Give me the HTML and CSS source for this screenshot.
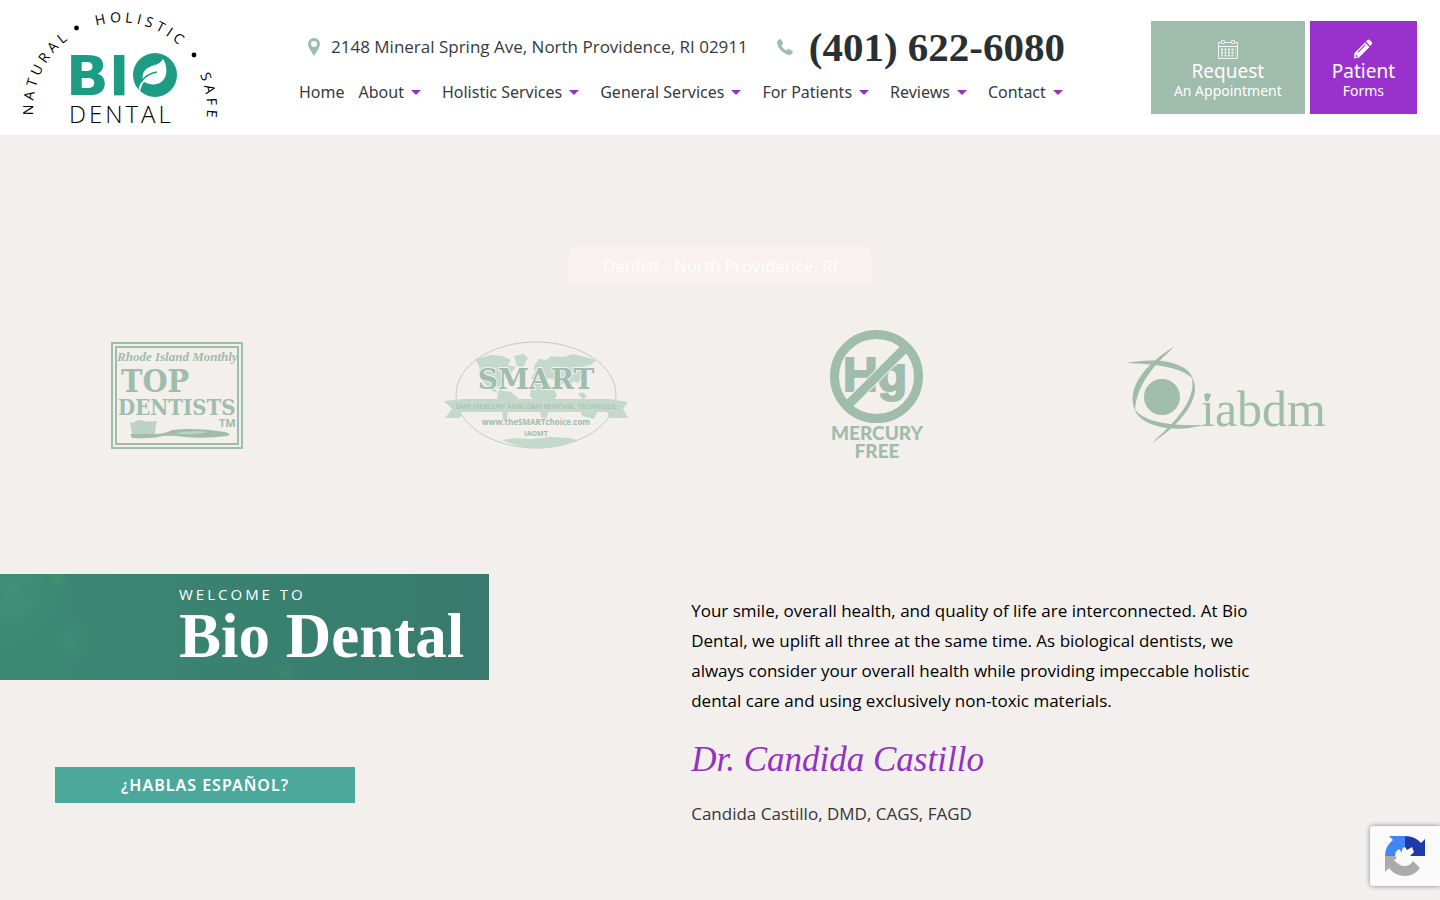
FILE: index.html
```
<!DOCTYPE html>
<html lang="en">
<head>
    <meta charset="UTF-8">
    <meta name="viewport" content="width=device-width, initial-scale=1.0">
    <title>Bio Dental</title>
    <link rel="stylesheet" href="styles.css">
</head>
<body>
    <header class="site-header">
        <a class="logo" href="#" aria-label="Bio Dental">
            <svg width="200" height="135" viewBox="20 0 200 135">
                <path id="arc" d="M33.8 121.1 A87 87 0 1 1 206.2 121.1" fill="none"/>
                <g class="logo-arc">
                    <text><textPath href="#arc" startOffset="6">NATURAL</textPath></text>
                    <text><textPath href="#arc" startOffset="124">HOLISTIC</textPath></text>
                    <text><textPath href="#arc" startOffset="249">SAFE</textPath></text>
                </g>
                <circle cx="76.5" cy="28" r="2.4"/>
                <circle cx="194" cy="55" r="2.4"/>
                <text class="logo-bio" x="66" y="95">BI</text>
                <circle cx="155" cy="75" r="22" fill="#1d9c84"/>
                <path d="M139 91 C139 86 140 83 143 81 C141 71 147 67 155 65 C159 64 161 62 163 59 C166 63 167 70 166 74 C164 84 154 87 144 82 C142 84 141 88 140 91Z" fill="#fff"/>
                <path d="M141 82 C145 76 150 73 157 72" fill="none" stroke="#1d9c84" stroke-width="1.5"/>
                <text class="logo-dental" x="69" y="123">DENTAL</text>
            </svg>
        </a>

        <div class="header-main">
            <div class="contact-row">
                <a class="address" href="#">
                    <svg width="12" height="18" viewBox="0 0 12 18"><path fill-rule="evenodd" d="M6 0a6 6 0 0 1 6 6c0 2-1 3.500-1.700 5L6 18 1.700 11C1 9.500 0 8 0 6a6 6 0 0 1 6-6zm0 3a3 3 0 1 0 0 6 3 3 0 0 0 0-6z"/></svg>
                    2148 Mineral Spring Ave, North Providence, RI 02911
                </a>
                <a class="phone" href="tel:4016226080">
                    <svg width="16" height="16" viewBox="0 0 16 16"><path d="M1 1.500C2 .5 3.500 0 4 .5L6 4c.3.800-.2 1.500-1.600 2.500.8 2 2.800 4 5 5 1-1.400 1.800-2 2.600-1.600l3.500 2c.6.500 0 2-.9 3-1 .9-2.600 1.400-4.600.6C5.500 13.700 2 10 .5 6-.2 4 .2 2.500 1 1.500z"/></svg>
                    <span>(401) 622-6080</span>
                </a>
            </div>
            <nav class="main-nav">
                <a href="#">Home</a>
                <a class="has-menu" href="#">About</a>
                <a class="has-menu" href="#">Holistic Services</a>
                <a class="has-menu" href="#">General Services</a>
                <a class="has-menu" href="#">For Patients</a>
                <a class="has-menu" href="#">Reviews</a>
                <a class="has-menu" href="#">Contact</a>
            </nav>
        </div>

        <div class="header-actions">
            <a class="action request" href="#">
                <svg width="20" height="20" viewBox="0 0 20 20" fill="none" stroke="#fff" stroke-opacity=".85">
                    <path d="M3.500 3.500h-3v16h19v-16h-3M7 3.500h6M.5 7.500h19"/>
                    <circle cx="5" cy="3" r="1.800"/><circle cx="15" cy="3" r="1.800"/>
                    <path stroke-width="2" stroke-dasharray="2 1.500" d="M3 10.500h14.500M3 13.500h14.500M3 16.500h14.500"/>
                </svg>
                <strong>Request</strong>
                <span>An Appointment</span>
            </a>
            <a class="action forms" href="#">
                <svg width="20" height="20" viewBox="0 0 20 20" fill="#fff">
                    <path d="M13 2.500l1.500-1.500q1-1 2.200 0l2 2q1 1.200 0 2.200L17.200 7z"/>
                    <path fill-rule="evenodd" d="M12 3.500L16.500 8 6 18.500 1 19.500 1.500 14zM3 15.500l-.4 2.400L5 17.500zM12 5.500l-7.500 7.500.7.700 7.500-7.500z"/>
                </svg>
                <strong>Patient</strong>
                <span>Forms</span>
            </a>
        </div>
    </header>

    <main>
        <section class="intro">
            <p class="location-tab">Dentist - North Providence, RI</p>
            <div class="awards">
                <svg width="132" height="107" viewBox="111 341 132 107" role="img" aria-label="Top Dentists">
                    <g fill="none" stroke="#9fbcad">
                        <rect x="112" y="342" width="130" height="105" stroke-width="2"/>
                        <rect x="116" y="346" width="122" height="97" stroke-width="2"/>
                    </g>
                    <text class="top-monthly" x="117" y="360">Rhode Island Monthly</text>
                    <text class="top-top" x="121" y="391">TOP</text>
                    <text class="top-dentists" x="118" y="414">DENTISTS</text>
                    <text class="top-tm" x="219" y="426">TM</text>
                    <path d="M130 421q3 2 6-1 4-2 8 0 5 1 12 0 2 1 0 3l-1 10h-23z" fill="#bdd2c6"/>
                    <path d="M131 433h24q10 0 17-4 24-3 53 2 8 2 2 4-22 3-42 1-12-2-22-1-12 3-30 2-3-1-2-4z" fill="#9fbcad"/>
                    <path d="M174 432q20-3 34-1-14 4-34 1z" fill="#bdd2c6"/>
                </svg>

                <svg width="185" height="107" viewBox="445 341 185 107" role="img" aria-label="SMART">
                    <ellipse cx="537" cy="394" rx="80" ry="53" fill="none" stroke="#c3cbc3"/>
                    <g fill="#c5d8ce">
                        <path d="M476 358l16-4 12 1 8 4-3 5 8 2-5 6-7 5-3 8-7 2 4 5-8-3-8-10-3-14z"/>
                        <path d="M515 355l10-2 4 4-5 9-6-1z"/>
                        <path d="M535 365l5-7 8 1 4-4 12 1 10-3 16 4 7 2-5 5-6 1-1 8-6 9-5-2-3 9-7-7-4 6-6-10-8-1-8 4-6-4 4-6z"/>
                        <path d="M532 383l11-3 10 5 5 9-7 12-4 12-5-2-2-13-9-8z"/>
                        <path d="M500 389l12 2 7 6-4 9-6 5-2 10-3-3-1-13-5-8z"/>
                        <path d="M579 393l5-2 4 5-4 2zM581 408l12-6 6 8-4 8-12-3z"/>
                        <path d="M503 439l14-2 16 1 18-2 20 1 7 2q-38 17-75 0z"/>
                        <path d="M445 400l20-2h145l19 3-5 7 5 9h-18l-3-6H463l-2 6h-15l7-9z"/>
                    </g>
                    <text class="smart-title" x="537" y="388">SMART</text>
                    <text class="smart-ribbon" x="537" y="408">SAFE MERCURY AMALGAM REMOVAL TECHNIQUE</text>
                    <text class="smart-url" x="537" y="424">www.theSMARTchoice.com</text>
                    <text class="smart-org" x="537" y="435">IAOMT</text>
                </svg>

                <svg width="94" height="130" viewBox="831 330 94 130" role="img" aria-label="Mercury free">
                    <text class="hg" x="844" y="391">Hg</text>
                    <g fill="none">
                        <path d="M850 404L906 348" stroke="#f3efec" stroke-width="11"/>
                        <path d="M850 404L906 348" stroke="#9fbcad" stroke-width="9"/>
                        <circle cx="877.500" cy="376.500" r="42" stroke="#9fbcad" stroke-width="9"/>
                    </g>
                    <text class="mercury" x="878" y="440">MERCURY</text>
                    <text class="mercury" x="878" y="458">FREE</text>
                </svg>

                <svg width="205" height="100" viewBox="1125 345 205 100" role="img" aria-label="iabdm">
                    <g fill="#9fbcad">
                        <circle cx="1162" cy="397" r="18"/>
                        <path d="M1126 363C1155 357 1188 361 1193 379C1182 367 1155 364 1126 363z"/>
                        <path d="M1175 346C1154 365 1137 384 1135 410C1126 390 1143 365 1175 346z"/>
                        <path d="M1192 377C1204 397 1179 426 1152 443C1178 419 1196 400 1192 377z"/>
                        <path d="M1134 408C1142 422 1170 426 1203 425C1178 433 1140 428 1134 408z"/>
                        <path d="M1204 394h7l-2 6q-2 3-4 0z"/>
                    </g>
                    <text class="iabdm" x="1201" y="426">iabdm</text>
                </svg>
            </div>
        </section>

        <section class="welcome">
            <div class="welcome-side">
                <h1 class="welcome-banner">
                    <small>Welcome to</small>
                    <span>Bio Dental</span>
                </h1>
                <a class="espanol" href="#">¿Hablas Español?</a>
            </div>
            <div class="welcome-text">
                <p>Your smile, overall health, and quality of life are interconnected. At Bio Dental, we uplift all three at the same time. As biological dentists, we always consider your overall health while providing impeccable holistic dental care and using exclusively non-toxic materials.</p>
                <p class="signature">Dr. Candida Castillo</p>
                <p class="doctor">Candida Castillo, DMD, CAGS, FAGD</p>
            </div>
        </section>
    </main>

    <aside class="captcha" aria-label="reCAPTCHA">
        <svg width="42" height="42" viewBox="0 0 42 42">
            <path d="M21 1v20h20V4l-4 4Q31 1 21 1z" fill="#1c3aa9"/>
            <path d="M21 1H5l4 4Q1 11 1 21h20z" fill="#4285f4"/>
            <path d="M1 21v16l4-4q6 8 16 8 9 0 15-8l-7-7q-3 5-8 5-7 0-8-5l5-5z" fill="#ababab"/>
            <path d="M11 21q0-5 4-7l3 4q-1-5 3-6l2 3 5-3 2 5-4 4 4 4-4 3-5-1-3 3-5-2-3-3 3-2z" fill="#fafafa"/>
        </svg>
    </aside>
</body>
</html>
```
FILE: styles.css
```
* {
    box-sizing: border-box;
}
body {
    margin: 0;
    background: #f3efec;
    color: #000;
    font-family: "Open Sans", sans-serif;
    font-size: 17px;
    line-height: 30px;
}
a {
    color: inherit;
    text-decoration: none;
}
p, h1 {
    margin: 0;
}
svg {
    display: block;
    flex: none;
    overflow: visible;
}

/* header */
.site-header {
    display: flex;
    align-items: center;
    height: 135px;
    padding: 0 23px 0 20px;
    background: #fff;
    color: #363b3d;
}
.logo-arc {
    font-family: "Open Sans", sans-serif;
    font-size: 14px;
    letter-spacing: 4px;
}
.logo-bio {
    font-family: "DejaVu Sans", sans-serif;
    font-size: 56px;
    font-weight: bold;
    fill: #1d9c84;
}
.logo-dental {
    font-family: "Open Sans", sans-serif;
    font-size: 24px;
    font-weight: 300;
    letter-spacing: 3px;
}
.header-main {
    margin-left: 79px;
    padding-bottom: 6px;
    white-space: nowrap;
}
.contact-row {
    display: flex;
    align-items: center;
    gap: 29px;
    height: 50px;
    padding-left: 9px;
}
.address, .phone {
    display: flex;
    align-items: center;
    gap: 11px;
}
.phone {
    gap: 16px;
}
.contact-row svg {
    fill: #9fbcad;
}
.phone span {
    color: #293033;
    font: bold 41px/50px "Liberation Serif", serif;
}
.main-nav {
    display: flex;
    gap: 14px;
    margin-top: 5px;
    font-family: "Noto Sans", sans-serif;
    font-size: 16px;
}
.has-menu {
    display: flex;
    align-items: center;
    gap: 7px;
    margin-right: 7px;
}
.has-menu::after {
    content: "";
    border: 5px solid transparent;
    border-top-color: #9131c6;
    border-bottom: 0;
}
.header-actions {
    display: flex;
    gap: 5px;
    margin-left: auto;
}
.action {
    display: flex;
    flex-direction: column;
    align-items: center;
    height: 93px;
    padding: 18px 22px 0;
    background: #9fbcad;
    color: #fff;
    font-family: "Noto Sans", sans-serif;
    font-size: 14px;
    line-height: 16px;
    white-space: nowrap;
}
.action strong {
    font-size: 19px;
    font-weight: normal;
    line-height: 24px;
}
.request {
    padding-left: 23px;
    padding-right: 23px;
}
.forms {
    background: #9932cc;
}

/* awards */
.intro {
    display: flex;
    flex-direction: column;
    align-items: center;
    padding-top: 111px;
}
.location-tab {
    padding: 5px 34px 3px;
    background: #f7f2f0;
    border-radius: 8px 8px 0 0;
    color: #fffdfc;
}
.awards {
    display: flex;
    align-items: center;
    justify-content: space-around;
    align-self: stretch;
    margin-top: 46px;
    padding: 0 10px;
}
.awards text {
    fill: #9fbcad;
}
.top-monthly {
    font: italic bold 13px "Liberation Serif", serif;
}
.top-top {
    font: bold 32px "DejaVu Serif Condensed", "DejaVu Serif", serif;
}
.top-dentists {
    font: bold 22px "DejaVu Serif Condensed", "DejaVu Serif", serif;
}
.top-tm {
    font-size: 11px;
    font-weight: bold;
}
.smart-title, .smart-ribbon, .smart-url, .smart-org, .mercury {
    text-anchor: middle;
}
.smart-title {
    font: bold 28px "DejaVu Serif", serif;
    paint-order: stroke;
    stroke: #f3efec;
    stroke-width: 2px;
}
.smart-ribbon {
    font-size: 7px;
}
.smart-url {
    font-size: 8px;
    font-weight: bold;
}
.smart-org {
    font-size: 7px;
    font-weight: bold;
}
.hg {
    font: bold 48px "Liberation Sans", sans-serif;
    stroke: #9fbcad;
    stroke-width: 2px;
}
.mercury {
    font: 900 19px Lato, sans-serif;
}
.iabdm {
    font: 50px "Liberation Serif", serif;
}

/* welcome */
.welcome {
    display: grid;
    grid-template-columns: 48% 1fr;
    margin-top: 114px;
}
.welcome-side {
    display: flex;
    flex-direction: column;
    align-items: flex-start;
    gap: 87px;
}
.welcome-banner {
    padding: 8px 25px 14px 179px;
    background:
        radial-gradient(circle at 58px 5px, #46936f, transparent 8px),
        radial-gradient(circle at 286px 98px, #40866f, transparent 12px),
        radial-gradient(circle at 70px 66px, #408d77, transparent 20px),
        radial-gradient(circle at 10px 15px, #408f78, transparent 60px),
        linear-gradient(90deg, #3b8973, #398270 45%, #387a6d);
    color: #fff;
    font-weight: normal;
}
.welcome-banner small {
    display: block;
    font-size: 15px;
    line-height: 24px;
    letter-spacing: 3px;
    text-transform: uppercase;
}
.welcome-banner span {
    display: block;
    font: bold 63px/60px "Liberation Serif", serif;
}
.espanol {
    width: 300px;
    margin-left: 55px;
    background: #4ca89b;
    color: #fff;
    font-family: "Noto Sans", sans-serif;
    font-size: 16px;
    font-weight: 600;
    letter-spacing: 1px;
    line-height: 36px;
    text-align: center;
    text-transform: uppercase;
}
.welcome-text {
    max-width: 560px;
    padding-top: 22px;
}
.signature {
    margin: 20px 0 15px;
    color: #9131c6;
    font: italic 35px/48px "Liberation Serif", cursive;
}
.doctor {
    color: #363636;
}

/* captcha badge */
.captcha {
    position: fixed;
    right: 0;
    bottom: 14px;
    width: 70px;
    padding: 9px 14px;
    background: #fafafa;
    border-radius: 3px 0 0 3px;
    box-shadow: 0 0 5px #808080;
}
```
